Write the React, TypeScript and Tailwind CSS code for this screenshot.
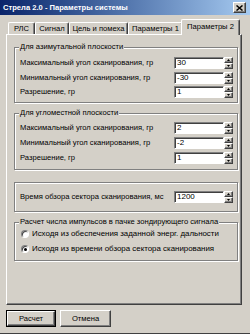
import React from "react";

const raised =
  "border border-t-white border-l-white border-r-[#404040] border-b-[#404040] shadow-[inset_-1px_-1px_0_#808080]";
const sunken =
  "border border-t-[#808080] border-l-[#808080] border-r-white border-b-white shadow-[inset_1px_1px_0_#404040]";
const etched = "border border-[#808080] shadow-[inset_1px_1px_0_#fff,1px_1px_0_#fff]";

function Arrow({ up }: { up?: boolean }) {
  return (
    <svg width="3" height="2" viewBox="0 0 3 2">
      <path d={up ? "M1.5 0L3 2H0z" : "M0 0H3L1.5 2z"} fill="#000" />
    </svg>
  );
}

function SpinField({ value }: { value: string }) {
  return (
    <div className="flex h-[12px]">
      <div className={`${sunken} w-[50px] bg-white pl-[2px] text-[8px] leading-[10px] text-black`}>
        {value}
      </div>
      <div className="flex w-[9px] flex-col">
        <div className={`${raised} flex h-[6px] items-center justify-center bg-[#d4d0c8]`}>
          <Arrow up />
        </div>
        <div className={`${raised} flex h-[6px] items-center justify-center bg-[#d4d0c8]`}>
          <Arrow />
        </div>
      </div>
    </div>
  );
}

function Row({ label, value }: { label: string; value: string }) {
  return (
    <div className="flex h-[12px] items-center justify-between pr-[4px]">
      <span>{label}</span>
      <SpinField value={value} />
    </div>
  );
}

function Group({
  title,
  className,
  children,
}: {
  title?: string;
  className: string;
  children: React.ReactNode;
}) {
  return (
    <fieldset className={`${etched} pl-[5px] ${className}`}>
      {title ? (
        <legend className="-ml-[1px] h-[10px] bg-[#d4d0c8] px-[1px] leading-[10px]">{title}</legend>
      ) : null}
      {children}
    </fieldset>
  );
}

function Radio({ checked, label }: { checked?: boolean; label: string }) {
  return (
    <div className="flex h-[10px] items-center gap-[3px] pl-[1px]">
      <span className="flex h-[8px] w-[8px] items-center justify-center rounded-full border border-t-[#808080] border-l-[#808080] border-r-white border-b-white bg-white shadow-[inset_1px_1px_0_#404040]">
        {checked ? <span className="h-[3px] w-[3px] rounded-full bg-black" /> : null}
      </span>
      <span className="text-[7.9px]">{label}</span>
    </div>
  );
}

const tabs = [
  { label: "РЛС", w: "w-[27px]" },
  { label: "Сигнал", w: "w-[34px]" },
  { label: "Цель и помеха", w: "w-[59px]" },
  { label: "Параметры 1", w: "w-[55px]" },
];

export default function App() {
  return (
    <div className="flex h-[334px] w-[250px] flex-col border-b border-b-[#404040] bg-[#d4d0c8] font-['Liberation_Sans',Arial,sans-serif] text-[7.6px] leading-[10px] text-black">
      <div className="flex h-[15px] items-center justify-between bg-linear-to-r from-[#0a246a] to-[#a6caf0] pl-[3px] pr-[4px]">
        <span className="text-[7.6px] font-bold text-white">Стрела 2.0 - Параметры системы</span>
        <div className={`${raised} flex h-[11px] w-[13px] items-center justify-center bg-[#d4d0c8]`}>
          <svg width="7" height="6" viewBox="0 0 7 6">
            <path d="M0.5 0.5L6.5 5.5M6.5 0.5L0.5 5.5" stroke="#000" strokeWidth="1.5" />
          </svg>
        </div>
      </div>

      <div className="flex h-[19px] items-end pl-[8px]">
        {tabs.map((t) => (
          <div
            key={t.label}
            className={`${t.w} flex h-[12px] items-center justify-center whitespace-nowrap rounded-t-[2px] border border-b-0 border-t-white border-l-white border-r-[#404040] shadow-[inset_-1px_0_0_#808080]`}
          >
            {t.label}
          </div>
        ))}
        <div className="relative z-10 -mb-[1px] -ml-[2px] flex h-[16px] w-[59px] items-start justify-center whitespace-nowrap rounded-t-[2px] border border-b-0 border-t-white border-l-white border-r-[#404040] bg-[#d4d0c8] pt-[2px] shadow-[inset_-1px_0_0_#808080]">
          Параметры 2
        </div>
      </div>

      <div className={`${raised} ml-[6px] flex h-[271px] w-[236px] flex-col pl-[7px] pr-[3px] pt-[7px]`}>
        <Group title="Для азимутальной плоскости" className="pb-[4px]">
          <div className="flex flex-col gap-[2.5px] pt-[5px]">
            <Row label="Максимальный угол сканирования, гр" value="30" />
            <Row label="Минимальный угол сканирования, гр" value="-30" />
            <Row label="Разрешение, гр" value="1" />
          </div>
        </Group>

        <Group title="Для угломестной плоскости" className="mt-[5px] pb-[5px]">
          <div className="flex flex-col gap-[3px] pt-[4px]">
            <Row label="Максимальный угол сканирования, гр" value="2" />
            <Row label="Минимальный угол сканирования, гр" value="-2" />
            <Row label="Разрешение, гр" value="1" />
          </div>
        </Group>

        <Group className="mt-[12px] pb-[8px] pt-[8px]">
          <Row label="Время обзора сектора сканирования, мс" value="1200" />
        </Group>

        <Group title="Расчет числа импульсов в пачке зондирующего сигнала" className="mt-[5px] pb-[6px]">
          <div className="flex flex-col gap-[5px] pt-[2px]">
            <Radio label="Исходя из обеспечения заданной энерг. дальности" />
            <Radio checked label="Исходя из времени обзора сектора сканирования" />
          </div>
        </Group>
      </div>

      <div className="flex gap-[4px] pl-[6px] pt-[5px]">
        <div className="flex h-[17px] w-[50px] border border-black">
          <div className={`${raised} flex flex-1 items-center justify-center`}>Расчет</div>
        </div>
        <div className={`${raised} flex h-[17px] w-[51px] items-center justify-center`}>Отмена</div>
      </div>
    </div>
  );
}
